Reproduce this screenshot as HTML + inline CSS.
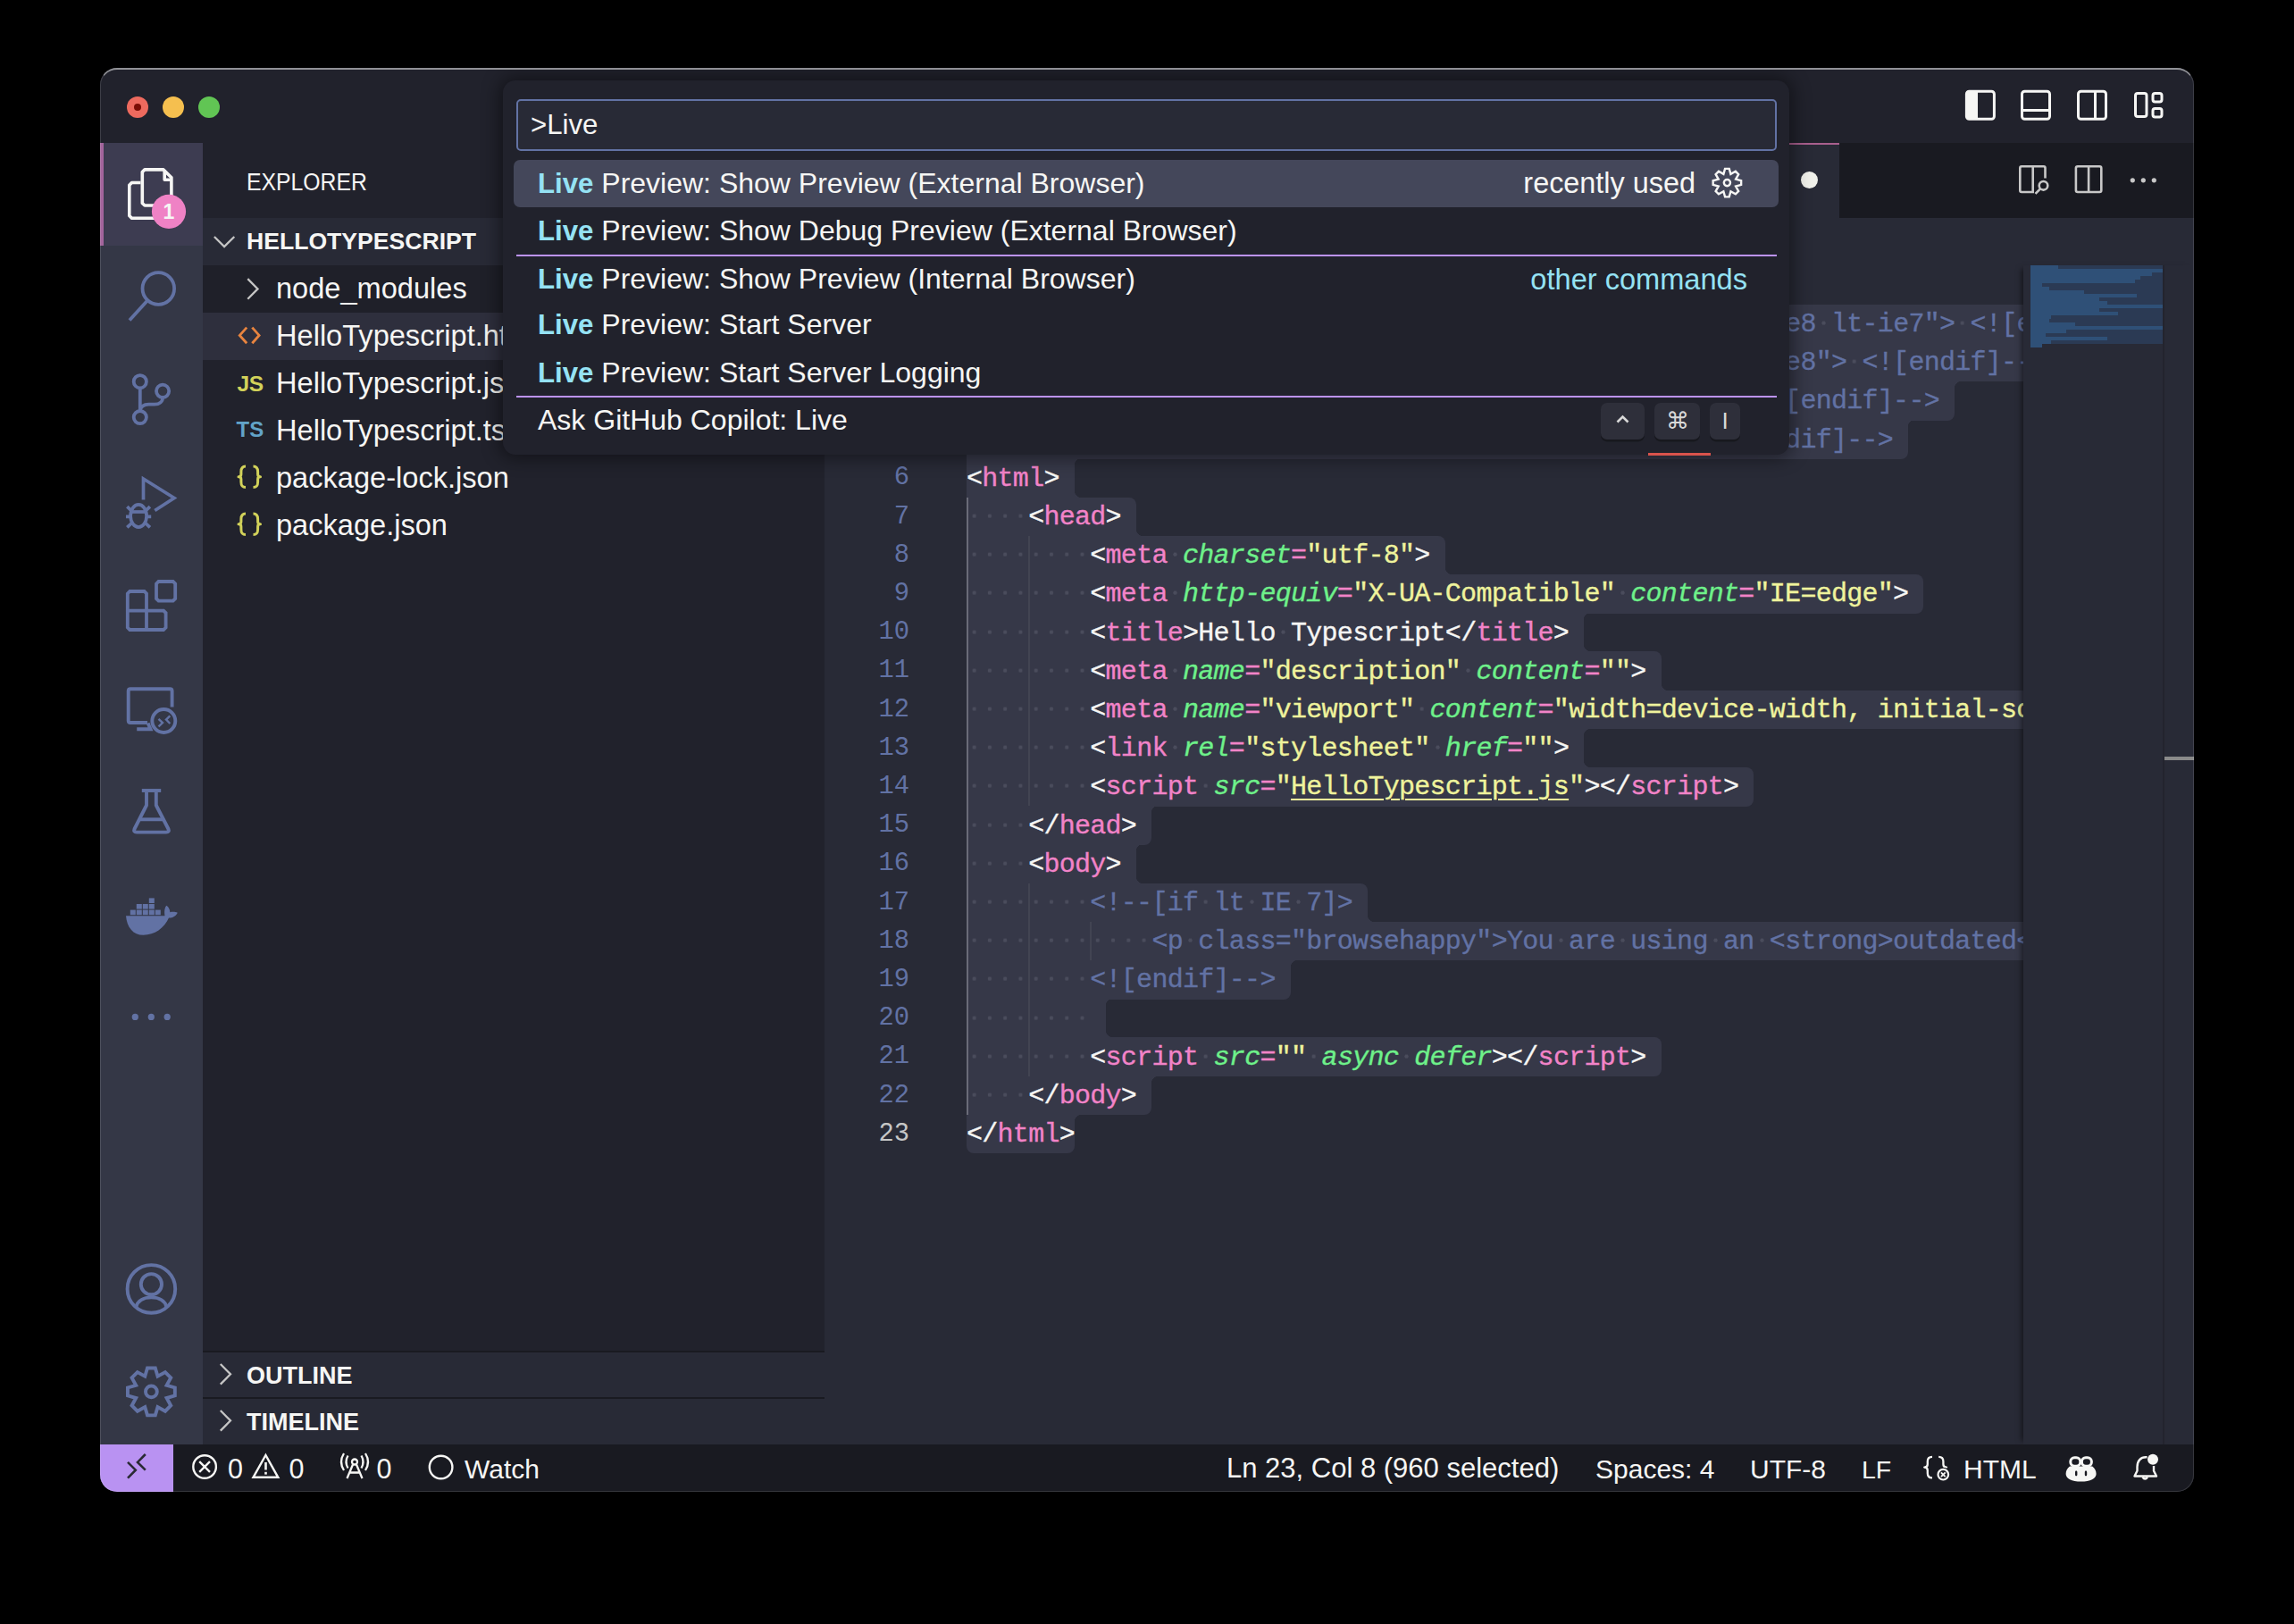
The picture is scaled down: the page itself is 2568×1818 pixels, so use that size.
<!DOCTYPE html>
<html><head><meta charset="utf-8">
<style>
*{box-sizing:border-box}
html,body{margin:0;padding:0;background:#000;width:2568px;height:1818px;overflow:hidden}
body{position:relative;font-family:"Liberation Sans",sans-serif;color:#f6f6f4}
.a{position:absolute}
#win{position:absolute;left:0;top:0;width:2568px;height:1818px;clip-path:inset(76px 112px 148px 112px round 19px);background:#21222c}
#winborder{position:absolute;left:112px;top:76px;width:2344px;height:1594px;border-radius:19px;border:1.5px solid rgba(255,255,255,0.13);border-top:2px solid rgba(255,255,255,0.5);pointer-events:none}
.tl{position:absolute;width:24px;height:24px;border-radius:50%;top:108px}
/* activity bar */
#act{left:112px;top:160px;width:115px;height:1457px;background:#343746}
.ai{position:absolute;left:112px;width:115px;height:115px;display:flex;align-items:center;justify-content:center}
.ai svg{width:58px;height:58px;overflow:visible}
/* sidebar */
#side{left:227px;top:160px;width:696px;height:1457px;background:#21222c}
.row{position:absolute;left:227px;width:696px;height:53px;font-size:32.6px;line-height:53px;white-space:nowrap}
.sh{position:absolute;left:227px;width:696px;height:53px;background:#282a36;font-weight:bold;font-size:27px;line-height:53px}
/* editor */
#ed{left:923px;top:160px;width:1534px;height:1457px;background:#282a36}
#tabs{left:923px;top:160px;width:1534px;height:84px;background:#191a21}
.sel{position:absolute;background:#363848}
.cc{position:absolute;width:8px;height:8px}
.ig{position:absolute;width:2px;background:#424452}
.ig.act{background:#6a6b78}
.cl{position:absolute;left:1082px;height:43.2px;line-height:43.2px;padding-top:1.5px;font-family:"Liberation Mono",monospace;font-size:30px;letter-spacing:-0.72px;white-space:pre;color:#f6f6f4;-webkit-text-stroke:0.35px currentColor}
.cl span{white-space:pre}
.cl .p{color:#f283c8}.cl .g{color:#6ef18a;font-style:italic}.cl .y{color:#eff39c}.cl .yu{color:#eff39c;text-decoration:underline;text-underline-offset:5px;text-decoration-thickness:2px}
.cl .c{color:#6272a4}.cl .ws{color:transparent;background:radial-gradient(circle at 50% 50%, #4a4c5c 1.9px, transparent 2.5px) 0 -1.4px/17.28px 34px repeat-x}
.ln{position:absolute;left:922px;width:96px;text-align:right;height:43.2px;line-height:43.2px;font-family:"Liberation Mono",monospace;font-size:28.8px;color:#6272a4}
.ln.act{color:#c6c6c6}
.mm{position:absolute;height:4px}
.mm.dk{background:#2b3a54}.mm.lt{background:#2f5077}
/* status */
#status{left:112px;top:1617px;width:2344px;height:53px;background:#191a21}
.st{position:absolute;top:1618.5px;height:52px;line-height:52px;font-size:30px;white-space:nowrap;color:#f6f6f4}
/* palette */
#qp{left:563px;top:90px;width:1440px;height:418.5px;background:#21222c;border-radius:14px;box-shadow:0 0 20px 4px rgba(0,0,0,0.45)}
#qin{left:578px;top:111px;width:1411px;height:58px;background:#282a36;border:2.4px solid #6272a4;border-radius:5px}
.qr{position:absolute;left:575px;width:1416px;height:53px;line-height:53px;font-size:32px;white-space:nowrap}
.qr .t{position:absolute;left:27px}
.qr b{color:#95e2f4;font-size:31.2px}
.qsep{position:absolute;left:578px;width:1411px;height:2.4px;background:#bd93f9}
.key{position:absolute;top:451px;height:41px;background:#2e2f3a;border-radius:7px;box-shadow:0 2.4px 0 #17181e;color:#d8d8d8;text-align:center;line-height:41px;font-size:26px}
</style></head><body>
<div id="win">
  <!-- title bar -->
  <div class="a" style="left:112px;top:76px;width:2344px;height:84px;background:#21222c"></div>
  <div class="tl" style="left:142px;background:#ed6a5e"><div style="position:absolute;left:8px;top:8px;width:8px;height:8px;border-radius:50%;background:#7a0d05"></div></div>
  <div class="tl" style="left:182px;background:#f5bf4f"></div>
  <div class="tl" style="left:222px;background:#61c554"></div>

  <!-- activity bar -->
  <div id="act" class="a"></div>
  <div class="a" style="left:112px;top:160px;width:115px;height:115px;background:#3d3c51"></div>
  <div class="a" style="left:112px;top:160px;width:4px;height:115px;background:#a3649c"></div>

  <!-- sidebar -->
  <div id="side" class="a"></div>
  <div class="a" style="left:276px;top:162px;height:84px;line-height:84px;font-size:27px;color:#f6f6f4;transform:scaleX(0.917);transform-origin:0 0">EXPLORER</div>
  <div class="sh" style="top:244px"><span style="position:absolute;left:49px;font-size:26.6px">HELLOTYPESCRIPT</span></div>
  <div class="row" style="top:297px;background:#1f2029"><span class="a" style="left:82px;top:-1.3px">node_modules</span></div>
  <div class="row" style="top:350px;background:#2e2f3d"><span class="a" style="left:82px;top:-1.3px">HelloTypescript.html</span></div>
  <div class="row" style="top:403px"><span class="a" style="left:82px;top:-1.3px">HelloTypescript.js</span></div>
  <div class="row" style="top:456px"><span class="a" style="left:82px;top:-1.3px">HelloTypescript.ts</span></div>
  <div class="row" style="top:509px"><span class="a" style="left:82px;top:-1.3px">package-lock.json</span></div>
  <div class="row" style="top:562px"><span class="a" style="left:82px;top:-1.3px">package.json</span></div>
  <div class="sh" style="top:1512px;border-top:2.4px solid #191a21"><span style="position:absolute;left:49px">OUTLINE</span></div>
  <div class="sh" style="top:1564px;border-top:2.4px solid #191a21"><span style="position:absolute;left:49px">TIMELINE</span></div>

  <!-- editor -->
  <div id="ed" class="a"></div>
  <div id="tabs" class="a"></div>
  <div class="a" style="left:923px;top:160px;width:1136px;height:84px;background:#282a36;border-top:2.4px solid #a95f8e"></div>
  <div class="a" style="left:2016px;top:192px;width:19px;height:19px;border-radius:50%;background:#f0f0ea"></div>
<div class="sel" style="left:1082px;top:297.3px;width:276.5px;height:43.7px;border-radius:8px 8px 0px 0px"></div>
<div class="cc" style="left:1358.5px;top:332.5px;background:radial-gradient(circle at 100% 0%, transparent 8px, #363848 8.5px)"></div>
<div class="sel" style="left:1082px;top:340.5px;width:1347.8px;height:43.7px;border-radius:0px 8px 8px 0px"></div>
<div class="sel" style="left:1082px;top:383.7px;width:1226.9px;height:43.7px;border-radius:0px 0px 8px 0px"></div>
<div class="cc" style="left:2308.9px;top:383.7px;background:radial-gradient(circle at 100% 100%, transparent 8px, #363848 8.5px)"></div>
<div class="sel" style="left:1082px;top:426.9px;width:1105.9px;height:43.7px;border-radius:0px 0px 8px 0px"></div>
<div class="cc" style="left:2187.9px;top:426.9px;background:radial-gradient(circle at 100% 100%, transparent 8px, #363848 8.5px)"></div>
<div class="sel" style="left:1082px;top:470.1px;width:1054.1px;height:43.7px;border-radius:0px 0px 8px 0px"></div>
<div class="cc" style="left:2136.1px;top:470.1px;background:radial-gradient(circle at 100% 100%, transparent 8px, #363848 8.5px)"></div>
<div class="sel" style="left:1082px;top:513.3px;width:121.0px;height:43.7px;border-radius:0px 0px 0px 0px"></div>
<div class="cc" style="left:1203.0px;top:513.3px;background:radial-gradient(circle at 100% 100%, transparent 8px, #363848 8.5px)"></div>
<div class="cc" style="left:1203.0px;top:548.5px;background:radial-gradient(circle at 100% 0%, transparent 8px, #363848 8.5px)"></div>
<div class="sel" style="left:1082px;top:556.5px;width:190.1px;height:43.7px;border-radius:0px 8px 0px 0px"></div>
<div class="cc" style="left:1272.1px;top:591.7px;background:radial-gradient(circle at 100% 0%, transparent 8px, #363848 8.5px)"></div>
<div class="sel" style="left:1082px;top:599.7px;width:535.7px;height:43.7px;border-radius:0px 8px 0px 0px"></div>
<div class="cc" style="left:1617.7px;top:634.9px;background:radial-gradient(circle at 100% 0%, transparent 8px, #363848 8.5px)"></div>
<div class="sel" style="left:1082px;top:642.9px;width:1071.4px;height:43.7px;border-radius:0px 8px 8px 0px"></div>
<div class="sel" style="left:1082px;top:686.1px;width:691.2px;height:43.7px;border-radius:0px 0px 0px 0px"></div>
<div class="cc" style="left:1773.2px;top:686.1px;background:radial-gradient(circle at 100% 100%, transparent 8px, #363848 8.5px)"></div>
<div class="cc" style="left:1773.2px;top:721.3px;background:radial-gradient(circle at 100% 0%, transparent 8px, #363848 8.5px)"></div>
<div class="sel" style="left:1082px;top:729.3px;width:777.6px;height:43.7px;border-radius:0px 8px 0px 0px"></div>
<div class="cc" style="left:1859.6px;top:764.5px;background:radial-gradient(circle at 100% 0%, transparent 8px, #363848 8.5px)"></div>
<div class="sel" style="left:1082px;top:772.5px;width:1330.6px;height:43.7px;border-radius:0px 8px 8px 0px"></div>
<div class="sel" style="left:1082px;top:815.7px;width:691.2px;height:43.7px;border-radius:0px 0px 0px 0px"></div>
<div class="cc" style="left:1773.2px;top:815.7px;background:radial-gradient(circle at 100% 100%, transparent 8px, #363848 8.5px)"></div>
<div class="cc" style="left:1773.2px;top:850.9px;background:radial-gradient(circle at 100% 0%, transparent 8px, #363848 8.5px)"></div>
<div class="sel" style="left:1082px;top:858.9px;width:881.3px;height:43.7px;border-radius:0px 8px 8px 0px"></div>
<div class="sel" style="left:1082px;top:902.1px;width:207.4px;height:43.7px;border-radius:0px 0px 8px 0px"></div>
<div class="cc" style="left:1289.4px;top:902.1px;background:radial-gradient(circle at 100% 100%, transparent 8px, #363848 8.5px)"></div>
<div class="sel" style="left:1082px;top:945.3px;width:190.1px;height:43.7px;border-radius:0px 0px 0px 0px"></div>
<div class="cc" style="left:1272.1px;top:945.3px;background:radial-gradient(circle at 100% 100%, transparent 8px, #363848 8.5px)"></div>
<div class="cc" style="left:1272.1px;top:980.5px;background:radial-gradient(circle at 100% 0%, transparent 8px, #363848 8.5px)"></div>
<div class="sel" style="left:1082px;top:988.5px;width:449.3px;height:43.7px;border-radius:0px 8px 0px 0px"></div>
<div class="cc" style="left:1531.3px;top:1023.7px;background:radial-gradient(circle at 100% 0%, transparent 8px, #363848 8.5px)"></div>
<div class="sel" style="left:1082px;top:1031.7px;width:2816.6px;height:43.7px;border-radius:0px 8px 8px 0px"></div>
<div class="sel" style="left:1082px;top:1074.9px;width:362.9px;height:43.7px;border-radius:0px 0px 8px 0px"></div>
<div class="cc" style="left:1444.9px;top:1074.9px;background:radial-gradient(circle at 100% 100%, transparent 8px, #363848 8.5px)"></div>
<div class="sel" style="left:1082px;top:1118.1px;width:155.5px;height:43.7px;border-radius:0px 0px 0px 0px"></div>
<div class="cc" style="left:1237.5px;top:1118.1px;background:radial-gradient(circle at 100% 100%, transparent 8px, #363848 8.5px)"></div>
<div class="cc" style="left:1237.5px;top:1153.3px;background:radial-gradient(circle at 100% 0%, transparent 8px, #363848 8.5px)"></div>
<div class="sel" style="left:1082px;top:1161.3px;width:777.6px;height:43.7px;border-radius:0px 8px 8px 0px"></div>
<div class="sel" style="left:1082px;top:1204.5px;width:207.4px;height:43.7px;border-radius:0px 0px 8px 0px"></div>
<div class="cc" style="left:1289.4px;top:1204.5px;background:radial-gradient(circle at 100% 100%, transparent 8px, #363848 8.5px)"></div>
<div class="sel" style="left:1082px;top:1247.7px;width:121.0px;height:43.7px;border-radius:0px 0px 8px 8px"></div>
<div class="cc" style="left:1203.0px;top:1247.7px;background:radial-gradient(circle at 100% 100%, transparent 8px, #363848 8.5px)"></div>
<div class="ig act" style="left:1082.0px;top:556.5px;height:691.2px"></div>
<div class="ig" style="left:1151.1px;top:599.7px;height:302.4px"></div>
<div class="ig" style="left:1151.1px;top:988.5px;height:216.0px"></div>
<div class="ig" style="left:1220.2px;top:1031.7px;height:43.2px"></div>
<div class="cl" style="top:297.3px"><span class="w">&lt;!</span><span class="p">DOCTYPE</span><span class="ws"> </span><span class="g">html</span><span class="w">&gt;</span></div>
<div class="cl" style="top:340.5px"><span class="ws"></span><span class="c">&lt;!--[if</span><span class="ws"> </span><span class="c">lt</span><span class="ws"> </span><span class="c">IE</span><span class="ws"> </span><span class="c">7]&gt;</span><span class="ws">      </span><span class="c">&lt;html</span><span class="ws"> </span><span class="c">class=&quot;no-js</span><span class="ws"> </span><span class="c">lt-ie9</span><span class="ws"> </span><span class="c">lt-ie8</span><span class="ws"> </span><span class="c">lt-ie7&quot;&gt;</span><span class="ws"> </span><span class="c">&lt;![endif]--&gt;</span></div>
<div class="cl" style="top:383.7px"><span class="ws"></span><span class="c">&lt;!--[if</span><span class="ws"> </span><span class="c">IE</span><span class="ws"> </span><span class="c">7]&gt;</span><span class="ws">         </span><span class="c">&lt;html</span><span class="ws"> </span><span class="c">class=&quot;no-js</span><span class="ws"> </span><span class="c">lt-ie9</span><span class="ws"> </span><span class="c">lt-ie8&quot;&gt;</span><span class="ws"> </span><span class="c">&lt;![endif]--&gt;</span></div>
<div class="cl" style="top:426.9px"><span class="ws"></span><span class="c">&lt;!--[if</span><span class="ws"> </span><span class="c">IE</span><span class="ws"> </span><span class="c">8]&gt;</span><span class="ws">         </span><span class="c">&lt;html</span><span class="ws"> </span><span class="c">class=&quot;no-js</span><span class="ws"> </span><span class="c">lt-ie9&quot;&gt;</span><span class="ws"> </span><span class="c">&lt;![endif]--&gt;</span></div>
<div class="cl" style="top:470.1px"><span class="ws"></span><span class="c">&lt;!--[if</span><span class="ws"> </span><span class="c">gt</span><span class="ws"> </span><span class="c">IE</span><span class="ws"> </span><span class="c">8]&gt;</span><span class="ws">      </span><span class="c">&lt;html</span><span class="ws"> </span><span class="c">class=&quot;no-js&quot;&gt;</span><span class="ws"> </span><span class="c">&lt;!--&lt;![endif]--&gt;</span></div>
<div class="cl" style="top:513.3px"><span class="w">&lt;</span><span class="p">html</span><span class="w">&gt;</span></div>
<div class="cl" style="top:556.5px"><span class="ws">    </span><span class="w">&lt;</span><span class="p">head</span><span class="w">&gt;</span></div>
<div class="cl" style="top:599.7px"><span class="ws">        </span><span class="w">&lt;</span><span class="p">meta</span><span class="ws"> </span><span class="g">charset</span><span class="p">=</span><span class="y">&quot;utf-8&quot;</span><span class="w">&gt;</span></div>
<div class="cl" style="top:642.9px"><span class="ws">        </span><span class="w">&lt;</span><span class="p">meta</span><span class="ws"> </span><span class="g">http-equiv</span><span class="p">=</span><span class="y">&quot;X-UA-Compatible&quot;</span><span class="ws"> </span><span class="g">content</span><span class="p">=</span><span class="y">&quot;IE=edge&quot;</span><span class="w">&gt;</span></div>
<div class="cl" style="top:686.1px"><span class="ws">        </span><span class="w">&lt;</span><span class="p">title</span><span class="w">&gt;</span><span class="w">Hello</span><span class="ws"> </span><span class="w">Typescript</span><span class="w">&lt;/</span><span class="p">title</span><span class="w">&gt;</span></div>
<div class="cl" style="top:729.3px"><span class="ws">        </span><span class="w">&lt;</span><span class="p">meta</span><span class="ws"> </span><span class="g">name</span><span class="p">=</span><span class="y">&quot;description&quot;</span><span class="ws"> </span><span class="g">content</span><span class="p">=</span><span class="y">&quot;&quot;</span><span class="w">&gt;</span></div>
<div class="cl" style="top:772.5px"><span class="ws">        </span><span class="w">&lt;</span><span class="p">meta</span><span class="ws"> </span><span class="g">name</span><span class="p">=</span><span class="y">&quot;viewport&quot;</span><span class="ws"> </span><span class="g">content</span><span class="p">=</span><span class="y">&quot;width=device-width, initial-scale=1&quot;</span><span class="w">&gt;</span></div>
<div class="cl" style="top:815.7px"><span class="ws">        </span><span class="w">&lt;</span><span class="p">link</span><span class="ws"> </span><span class="g">rel</span><span class="p">=</span><span class="y">&quot;stylesheet&quot;</span><span class="ws"> </span><span class="g">href</span><span class="p">=</span><span class="y">&quot;&quot;</span><span class="w">&gt;</span></div>
<div class="cl" style="top:858.9px"><span class="ws">        </span><span class="w">&lt;</span><span class="p">script</span><span class="ws"> </span><span class="g">src</span><span class="p">=</span><span class="y">&quot;</span><span class="yu">HelloTypescript.js</span><span class="y">&quot;</span><span class="w">&gt;</span><span class="w">&lt;/</span><span class="p">script</span><span class="w">&gt;</span></div>
<div class="cl" style="top:902.1px"><span class="ws">    </span><span class="w">&lt;/</span><span class="p">head</span><span class="w">&gt;</span></div>
<div class="cl" style="top:945.3px"><span class="ws">    </span><span class="w">&lt;</span><span class="p">body</span><span class="w">&gt;</span></div>
<div class="cl" style="top:988.5px"><span class="ws">        </span><span class="c">&lt;!--[if</span><span class="ws"> </span><span class="c">lt</span><span class="ws"> </span><span class="c">IE</span><span class="ws"> </span><span class="c">7]&gt;</span></div>
<div class="cl" style="top:1031.7px"><span class="ws">            </span><span class="c">&lt;p</span><span class="ws"> </span><span class="c">class=&quot;browsehappy&quot;&gt;You</span><span class="ws"> </span><span class="c">are</span><span class="ws"> </span><span class="c">using</span><span class="ws"> </span><span class="c">an</span><span class="ws"> </span><span class="c">&lt;strong&gt;outdated&lt;/strong&gt;</span><span class="ws"> </span><span class="c">browser.</span><span class="ws"> </span><span class="c">Please</span><span class="ws"> </span><span class="c">&lt;a</span><span class="ws"> </span><span class="c">href=&quot;#&quot;&gt;upgrade</span><span class="ws"> </span><span class="c">your</span><span class="ws"> </span><span class="c">browser&lt;/a&gt;</span><span class="ws"> </span><span class="c">to</span><span class="ws"> </span><span class="c">improve</span><span class="ws"> </span><span class="c">your</span><span class="ws"> </span><span class="c">experience.&lt;/p&gt;</span></div>
<div class="cl" style="top:1074.9px"><span class="ws">        </span><span class="c">&lt;![endif]--&gt;</span></div>
<div class="cl" style="top:1118.1px"><span class="ws">        </span></div>
<div class="cl" style="top:1161.3px"><span class="ws">        </span><span class="w">&lt;</span><span class="p">script</span><span class="ws"> </span><span class="g">src</span><span class="p">=</span><span class="y">&quot;&quot;</span><span class="ws"> </span><span class="g">async</span><span class="ws"> </span><span class="g">defer</span><span class="w">&gt;</span><span class="w">&lt;/</span><span class="p">script</span><span class="w">&gt;</span></div>
<div class="cl" style="top:1204.5px"><span class="ws">    </span><span class="w">&lt;/</span><span class="p">body</span><span class="w">&gt;</span></div>
<div class="cl" style="top:1247.7px"><span class="w">&lt;/</span><span class="p">html</span><span class="w">&gt;</span></div>
<div class="ln" style="top:297.3px">1</div>
<div class="ln" style="top:340.5px">2</div>
<div class="ln" style="top:383.7px">3</div>
<div class="ln" style="top:426.9px">4</div>
<div class="ln" style="top:470.1px">5</div>
<div class="ln" style="top:513.3px">6</div>
<div class="ln" style="top:556.5px">7</div>
<div class="ln" style="top:599.7px">8</div>
<div class="ln" style="top:642.9px">9</div>
<div class="ln" style="top:686.1px">10</div>
<div class="ln" style="top:729.3px">11</div>
<div class="ln" style="top:772.5px">12</div>
<div class="ln" style="top:815.7px">13</div>
<div class="ln" style="top:858.9px">14</div>
<div class="ln" style="top:902.1px">15</div>
<div class="ln" style="top:945.3px">16</div>
<div class="ln" style="top:988.5px">17</div>
<div class="ln" style="top:1031.7px">18</div>
<div class="ln" style="top:1074.9px">19</div>
<div class="ln" style="top:1118.1px">20</div>
<div class="ln" style="top:1161.3px">21</div>
<div class="ln" style="top:1204.5px">22</div>
<div class="ln act" style="top:1247.7px">23</div>
  <!-- minimap -->
  <div class="a" style="left:2265px;top:297px;width:191px;height:1320px;background:#282a36;box-shadow:-6px 0 6px -4px rgba(0,0,0,0.5)"></div>
<div class="mm dk" style="left:2273px;top:297px;width:148px"></div>
<div class="mm lt" style="left:2273px;top:297px;width:30.7px"></div>
<div class="mm dk" style="left:2273px;top:301px;width:148px"></div>
<div class="mm lt" style="left:2273px;top:301px;width:148.0px"></div>
<div class="mm dk" style="left:2273px;top:305px;width:148px"></div>
<div class="mm lt" style="left:2273px;top:305px;width:136.3px"></div>
<div class="mm dk" style="left:2273px;top:309px;width:148px"></div>
<div class="mm lt" style="left:2273px;top:309px;width:122.9px"></div>
<div class="mm dk" style="left:2273px;top:313px;width:148px"></div>
<div class="mm lt" style="left:2273px;top:313px;width:117.1px"></div>
<div class="mm dk" style="left:2273px;top:317px;width:148px"></div>
<div class="mm lt" style="left:2273px;top:317px;width:13.4px"></div>
<div class="mm dk" style="left:2273px;top:321px;width:148px"></div>
<div class="mm lt" style="left:2273px;top:321px;width:21.1px"></div>
<div class="mm dk" style="left:2273px;top:325px;width:148px"></div>
<div class="mm lt" style="left:2273px;top:325px;width:59.5px"></div>
<div class="mm dk" style="left:2273px;top:329px;width:148px"></div>
<div class="mm lt" style="left:2273px;top:329px;width:119.0px"></div>
<div class="mm dk" style="left:2273px;top:333px;width:148px"></div>
<div class="mm lt" style="left:2273px;top:333px;width:76.8px"></div>
<div class="mm dk" style="left:2273px;top:337px;width:148px"></div>
<div class="mm lt" style="left:2273px;top:337px;width:86.4px"></div>
<div class="mm dk" style="left:2273px;top:341px;width:148px"></div>
<div class="mm lt" style="left:2273px;top:341px;width:147.8px"></div>
<div class="mm dk" style="left:2273px;top:345px;width:148px"></div>
<div class="mm lt" style="left:2273px;top:345px;width:76.8px"></div>
<div class="mm dk" style="left:2273px;top:349px;width:148px"></div>
<div class="mm lt" style="left:2273px;top:349px;width:97.9px"></div>
<div class="mm dk" style="left:2273px;top:353px;width:148px"></div>
<div class="mm lt" style="left:2273px;top:353px;width:23.0px"></div>
<div class="mm dk" style="left:2273px;top:357px;width:148px"></div>
<div class="mm lt" style="left:2273px;top:357px;width:21.1px"></div>
<div class="mm dk" style="left:2273px;top:361px;width:148px"></div>
<div class="mm lt" style="left:2273px;top:361px;width:49.9px"></div>
<div class="mm dk" style="left:2273px;top:365px;width:148px"></div>
<div class="mm lt" style="left:2273px;top:365px;width:148.0px"></div>
<div class="mm dk" style="left:2273px;top:369px;width:148px"></div>
<div class="mm lt" style="left:2273px;top:369px;width:40.3px"></div>
<div class="mm dk" style="left:2273px;top:373px;width:148px"></div>
<div class="mm lt" style="left:2273px;top:373px;width:17.3px"></div>
<div class="mm dk" style="left:2273px;top:377px;width:148px"></div>
<div class="mm lt" style="left:2273px;top:377px;width:86.4px"></div>
<div class="mm dk" style="left:2273px;top:381px;width:148px"></div>
<div class="mm lt" style="left:2273px;top:381px;width:23.0px"></div>
<div class="mm lt" style="left:2273px;top:385px;width:13.4px"></div>
  <div class="a" style="left:2421px;top:297px;width:2px;height:1320px;background:#23242e"></div>
  <div class="a" style="left:2423px;top:847px;width:33px;height:4px;background:#8a8a8a"></div>

  <!-- status bar -->
  <div id="status" class="a"></div>
  <div class="a" style="left:112px;top:1617px;width:82px;height:53px;background:#b992f2"></div>
  <div class="st" style="left:1373px;font-size:31px;top:1617.5px">Ln 23, Col 8 (960 selected)</div>
  <div class="st" style="left:1786px">Spaces: 4</div>
  <div class="st" style="left:1959px">UTF-8</div>
  <div class="st" style="left:2084px;font-size:28.5px">LF</div>
  <div class="st" style="left:2198px">HTML</div>
  <div class="st" style="left:255px;font-size:30.5px;top:1617.5px">0</div>
  <div class="st" style="left:323.5px;font-size:30.5px;top:1617.5px">0</div>
  <div class="st" style="left:421.5px;font-size:30.5px;top:1617.5px">0</div>
  <div class="st" style="left:520px">Watch</div>

  <svg class="a" style="left:0;top:0;overflow:visible" width="2568" height="1818" viewBox="0 0 2568 1818"><g fill="none" stroke="#f6f6f4" stroke-width="3.6" stroke-linejoin="round"><path d="M159.3,192.5 L162,189.9 H183 L191.9,198.8 V227.5 L189.3,230 H162 L159.3,227.5 Z"/><path d="M184.2,189.9 V201.2 H191.9"/><path d="M157.5,204.5 H147.5 L144.8,207.2 V241.5 L147.5,244.2 H176"/></g>
<circle cx="189" cy="236.8" r="19.1" fill="#ef82c5"/>
<text x="189" y="245.2" text-anchor="middle" font-family="Liberation Sans" font-weight="bold" font-size="23" fill="#f6f6f4">1</text>
<g fill="none" stroke="#6272a4" stroke-width="3.8"><circle cx="177.3" cy="323" r="17.8"/><path d="M165,336.5 L145,358.5"/></g>
<g fill="none" stroke="#6272a4" stroke-width="3.8"><circle cx="156.8" cy="427.2" r="7.1"/><circle cx="156.8" cy="467.1" r="7.1"/><circle cx="182.1" cy="437.8" r="7.1"/><path d="M156.8,434.3 V460"/><path d="M182.1,444.9 C182.1,449.5 178.5,452.6 173,452.6 H166.5 C161,452.6 156.8,455.5 156.8,460"/></g>
<g fill="none" stroke="#6272a4" stroke-width="3.7" stroke-linejoin="miter"><path d="M160.5,559.5 V536 L195,557.5 L173.3,571.5"/><ellipse cx="155.1" cy="577.5" rx="9" ry="12.6"/><path d="M146.5,573 H164"/><path d="M142.3,567.2 L147.3,571.8 M167.9,567.2 L162.9,571.8 M141,578.4 H146 M164.2,578.4 H169.2 M142.3,590.4 L147.5,585.5 M167.9,590.4 L162.7,585.5"/></g>
<g fill="none" stroke="#6272a4" stroke-width="3.8" stroke-linejoin="miter"><path d="M175,653.5 L177.5,651 H193.7 L196.2,653.5 V670.2 L193.7,672.7 H177.5 L175,670.2 Z"/><path d="M142.8,664.5 L145.3,662 H161.5 L164,664.5 V683.6 H183.1 L185.6,686.1 V702.5 L183.1,705 H145.3 L142.8,702.5 Z"/><path d="M142.8,683.6 H164 V705"/></g>
<g fill="none" stroke="#6272a4" stroke-width="3.9" stroke-linejoin="round"><path d="M192.6,791.5 V773.5 Q192.6,771.2 190.3,771.2 H146 Q143.7,771.2 143.7,773.5 V806.7 Q143.7,809 146,809 H165"/><path d="M153.2,816.3 H168.5 L165.6,809.5" stroke-linejoin="miter"/><circle cx="183.3" cy="807" r="13"/></g>
<g fill="none" stroke="#6272a4" stroke-width="2.4"><path d="M177.5,804.8 L182,809.1 L177.5,813.4 M190.3,801.3 L186,805.6 L190.3,810"/></g>
<g fill="none" stroke="#6272a4" stroke-width="3.9" stroke-linejoin="round"><path d="M158.8,885 H180.2" stroke-linejoin="miter"/><path d="M164,887 V901.5 L150.5,928 Q149,931.6 153,931.6 H186 Q190,931.6 188.5,928 L174.8,901.5 V887"/><path d="M156.5,917.3 H182.7"/></g>
<g fill="#6272a4"><path d="M141,1025.2 H184.5 C184,1022 183.5,1017.5 186.2,1013.8 C189,1015.5 190.2,1018.5 190.3,1021.2 C193,1020.5 196.5,1020.8 198.8,1021.7 C197,1025.5 193,1027.8 189,1027.6 C184,1039 173,1046.8 160.5,1046.8 C149,1046.8 142,1038 141,1025.2 Z"/><rect x="145.8" y="1018.6" width="6" height="5.6"/><rect x="152.8" y="1018.6" width="6" height="5.6"/><rect x="159.8" y="1018.6" width="6" height="5.6"/><rect x="166.8" y="1018.6" width="6" height="5.6"/><rect x="173.8" y="1018.6" width="6" height="5.6"/><rect x="152.8" y="1012" width="6" height="5.6"/><rect x="159.8" y="1012" width="6" height="5.6"/><rect x="166.8" y="1012" width="6" height="5.6"/><rect x="166.8" y="1005.4" width="6" height="5.6"/></g>
<g fill="#6272a4"><circle cx="151.3" cy="1138.4" r="3.6"/><circle cx="169.3" cy="1138.4" r="3.6"/><circle cx="187.2" cy="1138.4" r="3.6"/></g>
<g fill="none" stroke="#6272a4" stroke-width="3.9"><circle cx="169.4" cy="1442.9" r="26.8"/><circle cx="169.4" cy="1437.7" r="11.6"/><path d="M152.2,1463.5 C154,1456 161,1452.4 169.4,1452.4 C177.8,1452.4 184.8,1456 186.6,1463.5"/></g>
<polygon points="164.98,1531.47 173.82,1531.47 176.52,1540.72 184.96,1536.08 191.22,1542.34 186.58,1550.78 195.83,1553.48 195.83,1562.32 186.58,1565.02 191.22,1573.46 184.96,1579.72 176.52,1575.08 173.82,1584.33 164.98,1584.33 162.28,1575.08 153.84,1579.72 147.58,1573.46 152.22,1565.02 142.97,1562.32 142.97,1553.48 152.22,1550.78 147.58,1542.34 153.84,1536.08 162.28,1540.72" fill="none" stroke="#6272a4" stroke-width="3.9" stroke-linejoin="miter"/><circle cx="169.4" cy="1557.9" r="6.4" fill="none" stroke="#6272a4" stroke-width="3.9"/>
<g fill="none" stroke="#c5c5c5" stroke-width="2.3"><path d="M239.9,265 L251.1,276.1 L262.3,265"/><path d="M277.3,312.1 L288.5,323.4 L277.3,334.7"/><path d="M246.8,1527 L258,1538.3 L246.8,1549.6"/><path d="M246.8,1579 L258,1590.3 L246.8,1601.6"/></g>
<g fill="none" stroke="#e8843f" stroke-width="2.8" stroke-linejoin="miter"><path d="M276.2,366.6 L268.3,375.4 L276.2,384.2 M282.3,366.6 L290.1,375.4 L282.3,384.2"/></g>
<text x="265.5" y="437.7" font-family="Liberation Sans" font-weight="bold" font-size="24.5" fill="#d2d25a" letter-spacing="-0.5">JS</text>
<text x="264.5" y="489.3" font-family="Liberation Sans" font-weight="bold" font-size="24" fill="#62a3c8" letter-spacing="0">TS</text>
<path d="M275,522 C270.8,522 269.9,524.3 269.9,528 V531 C269.9,532.8 268.8,533.7 267,533.7 C268.8,533.7 269.9,534.6 269.9,536.4 V539.5 C269.9,543.2 270.8,545.4 275,545.4 M283.5,522 C287.7,522 288.6,524.3 288.6,528 V531 C288.6,532.8 289.7,533.7 291.5,533.7 C289.7,533.7 288.6,534.6 288.6,536.4 V539.5 C288.6,543.2 287.7,545.4 283.5,545.4" fill="none" stroke="#d2d25a" stroke-width="3" stroke-linejoin="round"/>
<path d="M275,575 C270.8,575 269.9,577.3 269.9,581 V584 C269.9,585.8 268.8,586.7 267,586.7 C268.8,586.7 269.9,587.6 269.9,589.4 V592.5 C269.9,596.2 270.8,598.4 275,598.4 M283.5,575 C287.7,575 288.6,577.3 288.6,581 V584 C288.6,585.8 289.7,586.7 291.5,586.7 C289.7,586.7 288.6,587.6 288.6,589.4 V592.5 C288.6,596.2 287.7,598.4 283.5,598.4" fill="none" stroke="#d2d25a" stroke-width="3" stroke-linejoin="round"/>
<g fill="none" stroke="#f6f6f4" stroke-width="3"><rect x="2201.4" y="102.2" width="31" height="31" rx="3"/><rect x="2263.5" y="102.2" width="31" height="31" rx="3"/><path d="M2263.5,123.6 H2294.5"/><rect x="2326.5" y="102.2" width="31" height="31" rx="3"/><path d="M2345.5,102.2 V133.2"/><rect x="2390.5" y="104.5" width="12.5" height="26" rx="2.5"/><rect x="2410" y="104.5" width="10" height="9.5" rx="2.5"/><rect x="2410" y="121.5" width="10" height="9.5" rx="2.5"/></g>
<path d="M2201.4,105.2 Q2201.4,102.2 2204.4,102.2 H2214 V133.2 H2204.4 Q2201.4,133.2 2201.4,130.2 Z" fill="#f6f6f4"/>
<g fill="none" stroke="#c8c8c8" stroke-width="2.6"><path d="M2289.5,199.5 V188 Q2289.5,186.3 2287.8,186.3 H2263 Q2261.3,186.3 2261.3,188 V213.3 Q2261.3,215 2263,215 H2275.7 V186.3"/><circle cx="2287.5" cy="207.8" r="4.8"/><path d="M2284,211.3 L2278.5,216.8"/><rect x="2323.9" y="186.3" width="28.4" height="28.7" rx="2"/><path d="M2338.1,186.3 V215"/></g>
<g fill="#c8c8c8"><circle cx="2387.3" cy="201.8" r="2.6"/><circle cx="2399.3" cy="201.8" r="2.6"/><circle cx="2411.3" cy="201.8" r="2.6"/></g>
<g fill="none" stroke="#2a2a35" stroke-width="2.6"><path d="M143,1636.9 L151.8,1645.7 L143,1654.6 M162.8,1628 L154,1636.9 L162.8,1645.7"/></g>
<g fill="none" stroke="#f6f6f4" stroke-width="2.4"><circle cx="229.1" cy="1642" r="12.8"/><path d="M223.2,1636.1 L235,1647.9 M235,1636.1 L223.2,1647.9"/><path d="M297.4,1629 L283.5,1653.8 H311.3 Z" stroke-linejoin="miter"/><circle cx="493.6" cy="1642.5" r="12.8"/></g>
<rect x="296.2" y="1637" width="2.6" height="8.5" fill="#f6f6f4"/><rect x="296.2" y="1647.8" width="2.6" height="2.8" fill="#f6f6f4"/>
<g fill="none" stroke="#f6f6f4" stroke-width="2.3"><circle cx="397" cy="1636.5" r="3"/><path d="M395,1639.5 L388.5,1655 M399,1639.5 L405.5,1655 M391.3,1648.5 H402.7"/><path d="M389.5,1629.5 Q385.5,1636.5 389.5,1643.5 M404.5,1629.5 Q408.5,1636.5 404.5,1643.5"/><path d="M385,1627 Q379,1636.5 385,1646 M409,1627 Q415,1636.5 409,1646"/></g>
<g fill="none" stroke="#f6f6f4" stroke-width="2.3" stroke-linejoin="round"><path d="M2163,1630.8 C2159,1630.8 2157.8,1632.5 2157.8,1636 V1639.3 C2157.8,1641.3 2156.5,1642.6 2154.2,1642.6 C2156.5,1642.6 2157.8,1643.9 2157.8,1645.9 V1649.2 C2157.8,1652.7 2159,1654.4 2163,1654.4"/><path d="M2170.2,1630.8 C2174.2,1630.8 2175.4,1632.5 2175.4,1636 V1639.3 C2175.4,1641.3 2176.7,1642.6 2179,1642.6 C2176.7,1642.6 2175.4,1643.9 2175.4,1645.9 V1647"/></g>
<circle cx="2175.3" cy="1650.7" r="8" fill="#191a21"/><circle cx="2175.3" cy="1650.7" r="5.8" fill="none" stroke="#f6f6f4" stroke-width="2.2"/><path d="M2172.9,1648.3 L2177.7,1653.1 M2177.7,1648.3 L2172.9,1653.1" stroke="#f6f6f4" stroke-width="1.9"/>
<g fill="none" stroke="#f6f6f4" stroke-width="3"><rect x="2317.8" y="1631.8" width="11" height="9.5" rx="4.5"/><rect x="2330.4" y="1631.8" width="11" height="9.5" rx="4.5"/></g>
<path fill="#f6f6f4" fill-rule="evenodd" d="M2317,1641.5 H2342.2 C2345,1643.5 2346.6,1646.5 2346.6,1650 C2346.6,1655 2340,1658.6 2329.6,1658.6 C2319.2,1658.6 2312.6,1655 2312.6,1650 C2312.6,1646.5 2314.2,1643.5 2317,1641.5 Z M2324.2,1646.6 C2323.3,1646.6 2323,1647.3 2323,1648.2 V1650.8 C2323,1651.7 2323.3,1652.3 2324.2,1652.3 C2325.1,1652.3 2325.4,1651.7 2325.4,1650.8 V1648.2 C2325.4,1647.3 2325.1,1646.6 2324.2,1646.6 Z M2335,1646.6 C2334.1,1646.6 2333.8,1647.3 2333.8,1648.2 V1650.8 C2333.8,1651.7 2334.1,1652.3 2335,1652.3 C2335.9,1652.3 2336.2,1651.7 2336.2,1650.8 V1648.2 C2336.2,1647.3 2335.9,1646.6 2335,1646.6 Z"/>
<g fill="none" stroke="#f6f6f4" stroke-width="2.4" stroke-linejoin="round"><path d="M2403.5,1631.3 C2396,1630.5 2392.5,1636 2392.5,1642 V1646.5 L2389.5,1652.5 H2414 L2411,1646.5 V1641"/><path d="M2398.5,1653.5 Q2401.2,1657.5 2404,1653.5" stroke-linejoin="round"/></g>
<circle cx="2410" cy="1633.7" r="6" fill="#f6f6f4"/></svg>
  <!-- palette -->
  <div id="qp" class="a"></div>
  <div id="qin" class="a"></div>
  <div class="a" style="left:594px;top:111px;height:58px;line-height:58px;font-size:31.2px">&gt;Live</div>
  <div class="qr" style="top:179px;background:#44475a;border-radius:7px"><span class="t"><b>Live</b> Preview: Show Preview (External Browser)</span><span class="a" style="right:93px;font-size:32.4px">recently used</span></div>
  <div class="qr" style="top:232px"><span class="t"><b>Live</b> Preview: Show Debug Preview (External Browser)</span></div>
  <div class="qsep" style="top:285px"></div>
  <div class="qr" style="top:286px"><span class="t"><b>Live</b> Preview: Show Preview (Internal Browser)</span><span class="a" style="right:35px;font-size:32.6px;color:#95e2f4">other commands</span></div>
  <div class="qr" style="top:337px"><span class="t"><b>Live</b> Preview: Start Server</span></div>
  <div class="qr" style="top:390.5px"><span class="t"><b>Live</b> Preview: Start Server Logging</span></div>
  <div class="qsep" style="top:443px"></div>
  <div class="qr" style="top:444px"><span class="t">Ask GitHub Copilot: Live</span></div>
  <div class="key" style="left:1792px;width:49px"><svg width="49" height="41" style="position:absolute;left:0;top:0"><path d="M18.5,21.5 L24.5,15.5 L30.5,21.5" fill="none" stroke="#d8d8d8" stroke-width="2.6"/></svg></div>
  <div class="key" style="left:1852px;width:51px">&#8984;</div>
  <div class="key" style="left:1914px;width:34px">I</div>
  <svg class="a" style="left:0;top:0;overflow:visible" width="2568" height="1818" viewBox="0 0 2568 1818"><polygon points="1931.05,188.87 1935.75,188.87 1937.42,194.90 1942.86,191.82 1946.18,195.14 1943.10,200.58 1949.13,202.25 1949.13,206.95 1943.10,208.62 1946.18,214.06 1942.86,217.38 1937.42,214.30 1935.75,220.33 1931.05,220.33 1929.38,214.30 1923.94,217.38 1920.62,214.06 1923.70,208.62 1917.67,206.95 1917.67,202.25 1923.70,200.58 1920.62,195.14 1923.94,191.82 1929.38,194.90" fill="none" stroke="#f6f6f4" stroke-width="2.4" stroke-linejoin="miter"/><circle cx="1933.4" cy="204.6" r="3.6" fill="none" stroke="#f6f6f4" stroke-width="2.4"/></svg>
  <div class="a" style="left:1845px;top:507.2px;width:70px;height:2.4px;background:#d9534c"></div>
</div>
<div id="winborder"></div>
</body></html>
